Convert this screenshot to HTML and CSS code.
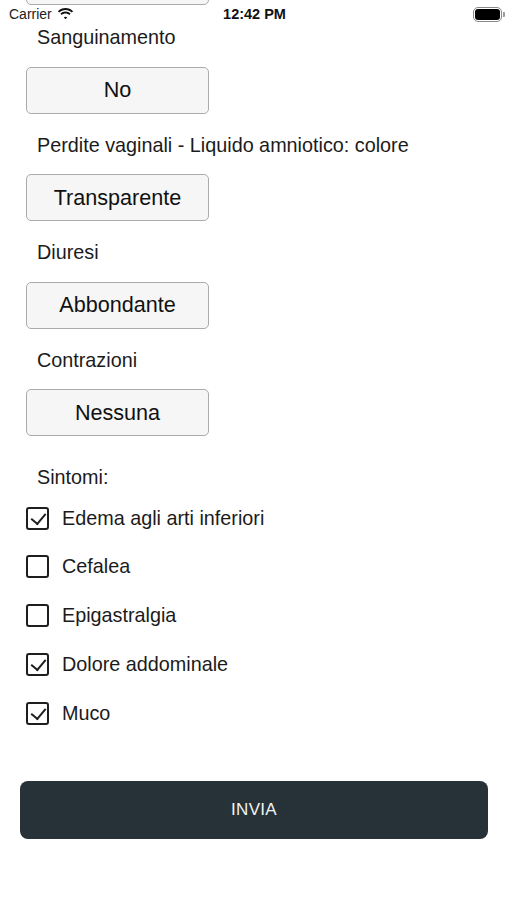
FILE: index.html
```html
<!DOCTYPE html>
<html lang="it">
  <head>
    <meta charset="UTF-8" />
    <meta name="viewport" content="width=device-width, initial-scale=1.0" />
    <title>Scheda</title>
    <link rel="stylesheet" href="styles.css">
  </head>
  <body>
    <div class="status-bar">
      <span class="carrier">
        Carrier
        <svg class="wifi" viewBox="0 0 18 13" xmlns="http://www.w3.org/2000/svg">
          <path d="M9 2.2c2.6 0 5 1 6.8 2.7l1.4-1.5C15 1.3 12.1 0 9 0S3 1.3.8 3.4l1.4 1.5C4 3.2 6.4 2.2 9 2.2z" />
          <path d="M9 6c1.6 0 3 .6 4.1 1.6l1.4-1.5C13.1 4.6 11.1 3.8 9 3.8s-4.1.8-5.5 2.3l1.4 1.5C6 6.6 7.4 6 9 6z" />
          <path d="M9 9.6c.7 0 1.4.3 1.8.7L9 12.2 7.2 10.3c.4-.4 1.1-.7 1.8-.7z" />
        </svg>
      </span>
      <span class="clock">12:42 PM</span>
      <span class="battery"><span class="battery-level"></span></span>
    </div>

    <main class="form">
      <div class="field">
        <button class="choice choice-prev" aria-label="Sì"></button>
      </div>

      <div class="field">
        <div class="label">Sanguinamento</div>
        <button class="choice">No</button>
      </div>

      <div class="field">
        <div class="label">Perdite vaginali - Liquido amniotico: colore</div>
        <button class="choice">Transparente</button>
      </div>

      <div class="field">
        <div class="label">Diuresi</div>
        <button class="choice">Abbondante</button>
      </div>

      <div class="field">
        <div class="label">Contrazioni</div>
        <button class="choice">Nessuna</button>
      </div>

      <div class="label symptoms-label">Sintomi:</div>
      <ul class="checklist">
        <li class="check-row"><span class="box checked"></span>Edema agli arti inferiori</li>
        <li class="check-row"><span class="box"></span>Cefalea</li>
        <li class="check-row"><span class="box"></span>Epigastralgia</li>
        <li class="check-row"><span class="box checked"></span>Dolore addominale</li>
        <li class="check-row"><span class="box checked"></span>Muco</li>
      </ul>

      <button class="submit">INVIA</button>
    </main>
  </body>
</html>
```

FILE: styles.css
```css
:root {
  --text-color: #1b1b1b;
  --button-bg: #f6f6f6;
  --button-border: #ababab;
  --dark: #263238;
}

* {
  box-sizing: border-box;
}

body {
  font-family: "Liberation Sans", Arial, sans-serif;
  color: var(--text-color);
  background: #ffffff;
  margin: 0;
  padding: 0;
  height: 900px;
  overflow: hidden;
  position: relative;
}

.status-bar {
  position: absolute;
  top: 0;
  left: 0;
  right: 0;
  height: 28px;
  display: flex;
  align-items: center;
  justify-content: space-between;
  padding: 0 7px 0 9px;
  font-size: 14px;
  z-index: 10;
}

.carrier {
  display: flex;
  align-items: center;
  gap: 5px;
  width: 120px;
  color: #222;
}

.wifi {
  width: 17px;
  height: 12px;
  fill: #111;
}

.clock {
  font-weight: bold;
  font-size: 14.5px;
  color: #111;
}

.battery {
  width: 120px;
  display: flex;
  justify-content: flex-end;
  align-items: center;
}

.battery-level {
  display: block;
  width: 25px;
  height: 11px;
  background: #000;
  border-radius: 3px;
  position: relative;
  outline: 1px solid #888;
  outline-offset: 1px;
}

.battery-level::after {
  content: "";
  position: absolute;
  right: -5px;
  top: 3px;
  width: 2px;
  height: 5px;
  background: #999;
  border-radius: 0 1px 1px 0;
}

.form {
  display: flex;
  flex-direction: column;
  padding: 0 19px 0 20px;
}

.field {
  display: flex;
  flex-direction: column;
  padding: 0 0 20px 6px;
}

.label {
  font-size: 19.8px;
  line-height: 22px;
  padding-left: 11px;
  margin-bottom: 18.5px;
}

.choice {
  width: 183px;
  height: 47px;
  background: var(--button-bg);
  border: 1.5px solid var(--button-border);
  border-radius: 5px;
  font-family: inherit;
  font-size: 21.6px;
  color: #111;
  padding: 0;
}

.choice-prev {
  margin-top: -42px;
}

.field:first-child {
  padding-bottom: 21px;
}

.symptoms-label {
  margin: 10px 0 19px 6px;
}

.checklist {
  list-style: none;
  margin: 0;
  padding: 0 0 0 6px;
  display: flex;
  flex-direction: column;
  gap: 26.8px;
}

.check-row {
  display: flex;
  align-items: center;
  gap: 13px;
  font-size: 19.8px;
  height: 22px;
}

.box {
  width: 23px;
  height: 23px;
  border: 2px solid #1e1e1e;
  border-radius: 3px;
  position: relative;
  flex-shrink: 0;
}

.box.checked::after {
  content: "";
  position: absolute;
  left: 6px;
  top: 1px;
  width: 7px;
  height: 12px;
  border-right: 2px solid #1e1e1e;
  border-bottom: 2px solid #1e1e1e;
  transform: rotate(40deg);
}

.submit {
  margin-top: 57px;
  height: 58px;
  background: var(--dark);
  color: #f2f2f2;
  border: none;
  border-radius: 8px;
  font-family: inherit;
  font-size: 17px;
  letter-spacing: 0.3px;
}
```
